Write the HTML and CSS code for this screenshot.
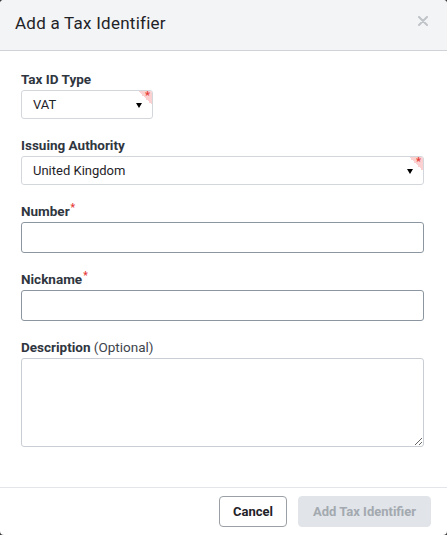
FILE: index.html
```html
<!DOCTYPE html>
<html lang="en">
<head>
<meta charset="utf-8">
<title>Add a Tax Identifier</title>
<link rel="stylesheet" href="styles.css">
</head>
<body>
<div class="dialog">
  <header class="dialog-header">
    <h1 class="dialog-title">Add a Tax Identifier</h1>
    <button class="close-btn" aria-label="Close">
      <svg width="10" height="10" viewBox="0 0 10 10"><path d="M1 1L9 9M9 1L1 9" stroke="#bfc3c8" stroke-width="2" stroke-linecap="round"/></svg>
    </button>
  </header>
  <main class="dialog-body">
    <div class="field">
      <label class="label">Tax ID Type</label>
      <div class="select select-small">
        <span class="select-value">VAT</span>
        <span class="arrow"></span>
        <span class="req-corner"><span class="req-star">*</span></span>
      </div>
    </div>
    <div class="field">
      <label class="label">Issuing Authority</label>
      <div class="select">
        <span class="select-value">United Kingdom</span>
        <span class="arrow"></span>
        <span class="req-corner"><span class="req-star">*</span></span>
      </div>
    </div>
    <div class="field">
      <label class="label">Number<span class="star">*</span></label>
      <input class="input" type="text">
    </div>
    <div class="field">
      <label class="label">Nickname<span class="star">*</span></label>
      <input class="input" type="text">
    </div>
    <div class="field">
      <label class="label">Description <span class="optional">(Optional)</span></label>
      <textarea class="textarea"></textarea>
    </div>
  </main>
  <footer class="dialog-footer">
    <button class="btn btn-cancel">Cancel</button>
    <button class="btn btn-primary" disabled>Add Tax Identifier</button>
  </footer>
</div>
</body>
</html>
```

FILE: styles.css
```css
* { box-sizing: border-box; }
html, body { margin: 0; padding: 0; height: 100%; }
body {
  background: #3a3a3a;
  font-family: Roboto, "Liberation Sans", Arial, sans-serif;
  color: #2f3640;
}
.dialog {
  height: 100vh;
  background: #fff;
  border-radius: 4px;
  overflow: hidden;
  display: flex;
  flex-direction: column;
}
.dialog-header {
  height: 51px;
  flex: none;
  background: #f3f4f5;
  border-bottom: 1px solid #cfd2d6;
  display: flex;
  align-items: center;
  justify-content: space-between;
  padding: 0 19px 4px 15px;
}
.dialog-title {
  margin: 0;
  font-size: 17px;
  font-weight: 400;
  color: #1f2328;
  letter-spacing: 0.25px;
}
.close-btn {
  background: none;
  border: 0;
  padding: 0;
  width: 10px;
  height: 10px;
  display: flex;
  margin-top: -4px;
}
.dialog-body {
  flex: 1;
  padding: 20px 23px 0 21px;
}
.field {
  display: flex;
  flex-direction: column;
  align-items: flex-start;
  margin-bottom: 18px;
}
.label {
  font-size: 13.5px;
  line-height: 16px;
  font-weight: 700;
  color: #2f3640;
  margin-bottom: 3px;
}
.star {
  color: #e53935;
  font-size: 10px;
  vertical-align: top;
  margin-left: 1px;
  position: relative;
  top: -3px;
}
.optional {
  font-weight: 400;
  color: #3d444c;
}
.select {
  position: relative;
  width: 100%;
  height: 29px;
  border: 1px solid #d3d7dc;
  border-radius: 3px;
  display: flex;
  align-items: center;
  padding: 0 10px 0 11px;
  font-size: 13px;
  color: #1f2328;
}
.select-small { width: 132px; }
.select-value { flex: 1; }
.arrow {
  width: 0;
  height: 0;
  border-left: 3.5px solid transparent;
  border-right: 3.5px solid transparent;
  border-top: 5px solid #000;
  margin-top: 1px;
}
.req-corner {
  position: absolute;
  top: 0;
  right: 0;
  width: 14px;
  height: 14px;
  border-top-right-radius: 2px;
  background: linear-gradient(to bottom left, #fbd0d0 50%, transparent 50%);
}
.req-star {
  position: absolute;
  top: 0;
  right: 2px;
  color: #e53935;
  font-size: 11px;
  line-height: 10px;
  font-weight: 700;
}
.input {
  width: 100%;
  height: 31px;
  border: 1px solid #8c96a1;
  border-radius: 3px;
  font-family: inherit;
  font-size: 13px;
  padding: 0 10px;
  background: #fff;
}
.textarea {
  width: 100%;
  height: 89px;
  border: 1px solid #c9ced4;
  border-radius: 3px;
  font-family: inherit;
  font-size: 13px;
  padding: 8px 10px;
  display: block;
  resize: both;
}
.dialog-footer {
  flex: none;
  border-top: 1px solid #e3e5e8;
  display: flex;
  justify-content: flex-end;
  gap: 11px;
  padding: 8px 16px 8px 16px;
}
.btn {
  height: 31px;
  border-radius: 4px;
  font-family: inherit;
  font-size: 13px;
  font-weight: 700;
  padding: 0 12px;
}
.btn-cancel {
  width: 68px;
  background: #fff;
  border: 1px solid #9aa0a6;
  color: #1f2328;
}
.btn-primary {
  width: 133px;
  background: #e1e4e8;
  border: 1px solid #e1e4e8;
  color: #a3a9b0;
}
```
